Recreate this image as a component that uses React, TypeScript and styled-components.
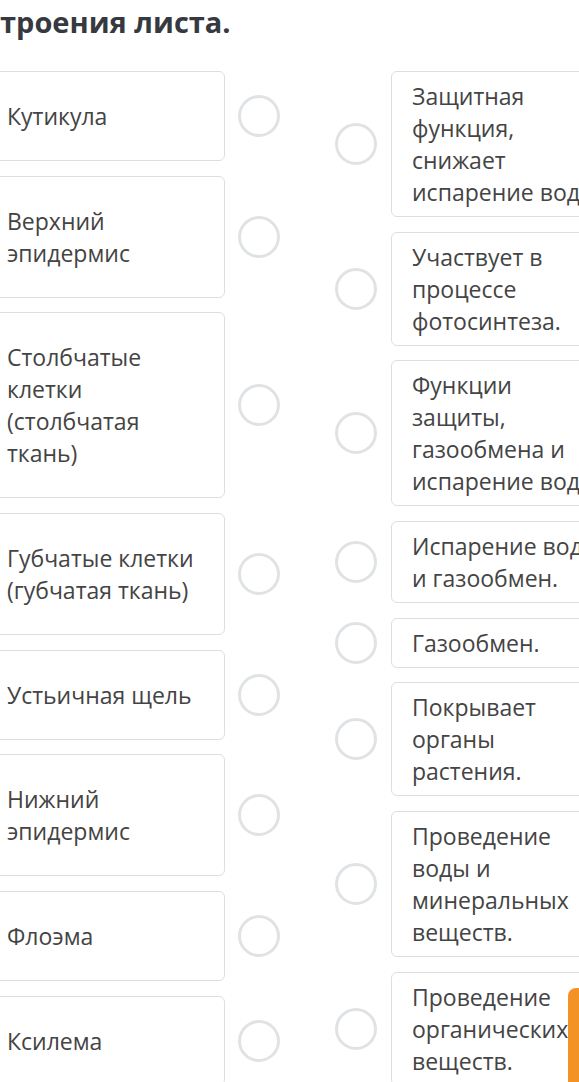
import React from "react";
import styled, { createGlobalStyle } from "styled-components";

const Global = createGlobalStyle`
  html, body { margin: 0; padding: 0; background: #ffffff; }
  body { font-family: "Open Sans", "Noto Sans", sans-serif; overflow: hidden; }
`;

const Page = styled.div`
  position: relative;
  width: 579px;
  height: 1082px;
  overflow: hidden;
  background: #fff;
`;

const Title = styled.h1`
  margin: 0;
  padding: 3px 0 0 0;
  font-size: 29px;
  line-height: 38px;
  font-weight: 700;
  color: #363a40;
  white-space: nowrap;
`;

const Board = styled.div`
  display: flex;
  gap: 55px;
  margin: 30px 0 0 -14px;
  align-items: flex-start;
`;

const Column = styled.div`
  display: flex;
  flex-direction: column;
  gap: 14.7px;
`;

const Row = styled.div<{ $gap: number }>`
  display: flex;
  align-items: center;
  gap: ${(p) => p.$gap}px;
`;

const Card = styled.div<{ $pad: number }>`
  box-sizing: border-box;
  width: 239px;
  flex: none;
  border: 1px solid #dedede;
  border-radius: 6px;
  padding: ${(p) => p.$pad}px 18px ${(p) => p.$pad}px 20px;
  font-size: 23px;
  line-height: 32px;
  color: #444;
  background: #fff;
`;

const Line = styled.div`
  white-space: nowrap;
`;

const Radio = styled.div`
  box-sizing: border-box;
  width: 42px;
  height: 42px;
  flex: none;
  border-radius: 50%;
  border: 3px solid #e0e3e5;
  background: #fff;
`;

const Tab = styled.div`
  position: absolute;
  left: 568px;
  top: 988px;
  width: 40px;
  height: 120px;
  border-radius: 8px 0 0 0;
  background: #f39325;
`;

const left: string[][] = [
  ["Кутикула"],
  ["Верхний", "эпидермис"],
  ["Столбчатые", "клетки", "(столбчатая", "ткань)"],
  ["Губчатые клетки", "(губчатая ткань)"],
  ["Устьичная щель"],
  ["Нижний", "эпидермис"],
  ["Флоэма"],
  ["Ксилема"],
];

const right: string[][] = [
  ["Защитная", "функция,", "снижает", "испарение воды."],
  ["Участвует в", "процессе", "фотосинтеза."],
  ["Функции", "защиты,", "газообмена и", "испарение воды."],
  ["Испарение воды", "и газообмен."],
  ["Газообмен."],
  ["Покрывает", "органы", "растения."],
  ["Проведение", "воды и", "минеральных", "веществ."],
  ["Проведение", "органических", "веществ."],
];

export default function App() {
  return (
    <Page>
      <Global />
      <Title>троения листа.</Title>
      <Board>
        <Column>
          {left.map((lines, i) => (
            <Row key={i} $gap={13}>
              <Card $pad={28}>
                {lines.map((l, j) => (
                  <Line key={j}>{l}</Line>
                ))}
              </Card>
              <Radio />
            </Row>
          ))}
        </Column>
        <Column>
          {right.map((lines, i) => (
            <Row key={i} $gap={14}>
              <Radio />
              <Card $pad={8}>
                {lines.map((l, j) => (
                  <Line key={j}>{l}</Line>
                ))}
              </Card>
            </Row>
          ))}
        </Column>
      </Board>
      <Tab />
    </Page>
  );
}
